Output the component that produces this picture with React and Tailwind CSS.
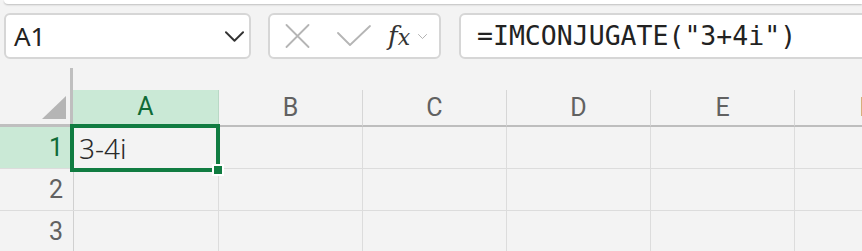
import React from "react";

const font = { fontFamily: "'Noto Sans', 'Open Sans', sans-serif" };

function Chevron({ className }) {
  return (
    <svg viewBox="0 0 20 11" className={className} fill="none">
      <path d="M1 1 L10 10 L19 1" stroke="currentColor" strokeWidth="2" strokeLinecap="round" strokeLinejoin="round" />
    </svg>
  );
}

export default function App() {
  const cols = ["B", "C", "D", "E", "F"];
  return (
    <div className="relative w-[862px] h-[251px] bg-[#f3f3f3] overflow-hidden" style={font}>
      <div className="ml-[4px] h-[4px] bg-white rounded-bl-[10px] shadow-[0_1px_2px_rgba(0,0,0,0.22)]" />
      {/* toolbar */}
      <div className="mt-[9px] flex h-[46px]">
        <div className="ml-[4px] w-[247px] shrink-0 rounded-[6px] border-2 border-[#d6d6d6] bg-white flex items-center justify-between pl-[8px] pr-[5px]">
          <span className="text-[26px] leading-none text-[#222]">A1</span>
          <Chevron className="w-[19px] h-[11px] text-[#333]" />
        </div>
        <div className="ml-[17px] w-[173px] shrink-0 rounded-[6px] border-2 border-[#d6d6d6] bg-white flex items-center pl-[15px]">
          <svg viewBox="0 0 24 24" className="w-[25px] h-[24px]" fill="none">
            <path d="M1 1 L23 23 M23 1 L1 23" stroke="#b5b5b5" strokeWidth="1.8" strokeLinecap="round" />
          </svg>
          <svg viewBox="0 0 34 22" className="ml-[27px] w-[34px] h-[22px]" fill="none">
            <path d="M1 8 L13 20 L33 1" stroke="#b5b5b5" strokeWidth="1.8" strokeLinecap="round" strokeLinejoin="round" />
          </svg>
          <span className="ml-[17px] text-[26px] leading-none italic text-[#333]" style={{ fontFamily: "'DejaVu Serif', serif" }}>
            f<span className="text-[22px]">x</span>
          </span>
          <Chevron className="ml-[8px] w-[9px] h-[5px] text-[#aaa]" />
        </div>
        <div className="ml-[18px] w-[420px] shrink-0 rounded-[6px] border-2 border-[#d6d6d6] bg-white flex items-center pl-[16px]">
          <span className="text-[26.5px] leading-none text-[#222]" style={{ fontFamily: "'DejaVu Sans Mono', monospace" }}>
            =IMCONJUGATE("3+4i")
          </span>
        </div>
      </div>

      {/* header row */}
      <div className="flex h-[68px]">
        <div className="w-[73px] shrink-0 pt-[9px]">
          <div className="h-full border-r-[3px] border-b-[3px] border-[#bfbfbf] flex items-end justify-end pr-[4px] pb-[5px]">
            <svg viewBox="0 0 24 23" className="w-[24px] h-[23px]">
              <polygon points="0,23 24,0 24,23" fill="#b5b5b5" />
            </svg>
          </div>
        </div>
        <div className="flex items-end">
          <div className="w-[146px] h-[37px] bg-[#cae9d6] border-r border-r-[#b9d9c6] border-b-[3px] border-b-[#107c41] flex items-center justify-center text-[25px] text-[#0f6b36]" style={{ fontFamily: "Roboto, sans-serif" }}>
            A
          </div>
          {cols.map((c) => (
            <div key={c} className="w-[144px] shrink-0 h-[37px] border-r border-r-[#d6d6d6] border-b-2 border-b-[#bdbdbd] flex items-center justify-center text-[25px] text-[#616161]" style={{ fontFamily: "Roboto, sans-serif" }}>
              {c}
            </div>
          ))}
        </div>
      </div>

      {/* rows */}
      {[1, 2, 3].map((r) => (
        <div key={r} className="flex h-[42px] border-b border-[#dcdcdc]">
          <div
            className={
              "w-[74px] shrink-0 flex items-center justify-end pr-[10px] text-[25px] border-r " +
              (r === 1 ? "bg-[#cae9d6] text-[#0f6b36] border-[#cae9d6]" : "text-[#616161] border-[#d0d0d0]")
            }
            style={{ fontFamily: "Roboto, sans-serif" }}
          >
            {r}
          </div>
          <div className="w-[145px] shrink-0 border-r border-[#dcdcdc] flex items-center pl-[5px]">
            {r === 1 && (
              <span className="text-[28px] leading-none text-[#2a2a2a] font-light" style={{ fontFamily: "'Noto Sans', sans-serif" }}>
                3-4i
              </span>
            )}
          </div>
          {cols.map((c) => (
            <div key={c} className="w-[144px] shrink-0 border-r border-[#dcdcdc]" />
          ))}
        </div>
      ))}

      {/* selection overlay */}
      <div className="absolute left-[70px] top-[124px] w-[150px] h-[48px] border-4 border-[#107c41]" />
      <div className="absolute left-[212px] top-[164px] w-[12px] h-[12px] bg-[#107c41] border-2 border-white" />
    </div>
  );
}
